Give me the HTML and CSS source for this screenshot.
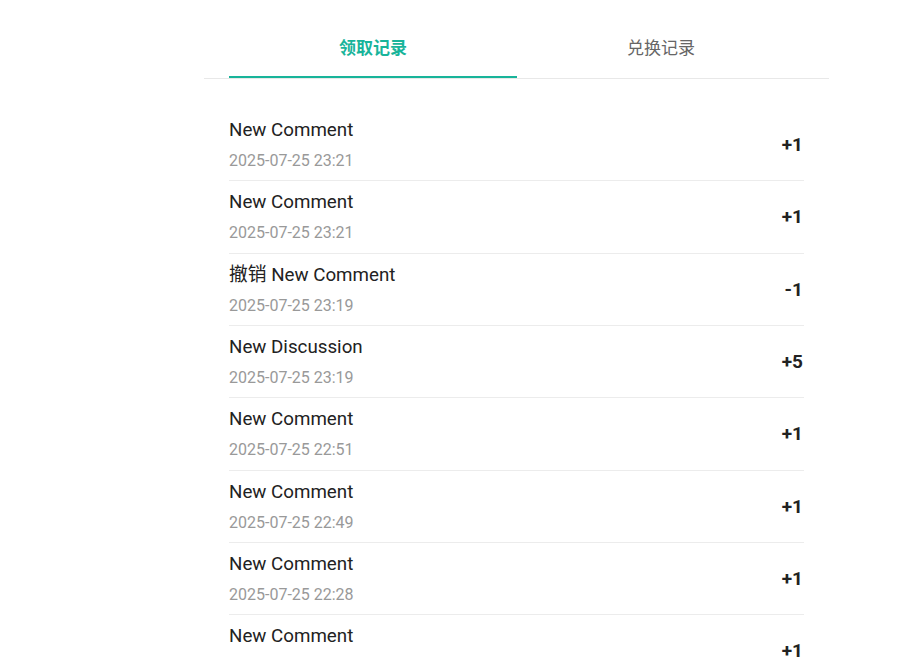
FILE: index.html
```html
<!DOCTYPE html>
<html lang="zh-CN">
<head>
    <meta charset="UTF-8">
    <meta name="viewport" content="width=device-width, initial-scale=1.0">
    <title>积分记录</title>
    <link rel="stylesheet" href="styles.css">
</head>
<body>
    <main class="records">
        <!-- Pestañas -->
        <div class="tabs">
            <button class="tab active">领取记录</button>
            <button class="tab">兑换记录</button>
        </div>

        <!-- Lista de registros -->
        <ul class="record-list">
            <li class="record">
                <div class="record-info">
                    <div class="record-title">New Comment</div>
                    <div class="record-date">2025-07-25 23:21</div>
                </div>
                <div class="record-amount">+1</div>
            </li>
            <li class="record">
                <div class="record-info">
                    <div class="record-title">New Comment</div>
                    <div class="record-date">2025-07-25 23:21</div>
                </div>
                <div class="record-amount">+1</div>
            </li>
            <li class="record">
                <div class="record-info">
                    <div class="record-title">撤销 New Comment</div>
                    <div class="record-date">2025-07-25 23:19</div>
                </div>
                <div class="record-amount">-1</div>
            </li>
            <li class="record">
                <div class="record-info">
                    <div class="record-title">New Discussion</div>
                    <div class="record-date">2025-07-25 23:19</div>
                </div>
                <div class="record-amount">+5</div>
            </li>
            <li class="record">
                <div class="record-info">
                    <div class="record-title">New Comment</div>
                    <div class="record-date">2025-07-25 22:51</div>
                </div>
                <div class="record-amount">+1</div>
            </li>
            <li class="record">
                <div class="record-info">
                    <div class="record-title">New Comment</div>
                    <div class="record-date">2025-07-25 22:49</div>
                </div>
                <div class="record-amount">+1</div>
            </li>
            <li class="record">
                <div class="record-info">
                    <div class="record-title">New Comment</div>
                    <div class="record-date">2025-07-25 22:28</div>
                </div>
                <div class="record-amount">+1</div>
            </li>
            <li class="record">
                <div class="record-info">
                    <div class="record-title">New Comment</div>
                    <div class="record-date">2025-07-25 22:20</div>
                </div>
                <div class="record-amount">+1</div>
            </li>
        </ul>
    </main>
</body>
</html>
```

FILE: styles.css
```css
/* Reset básico */
* {
    margin: 0;
    padding: 0;
    box-sizing: border-box;
}

body {
    font-family: Roboto, "Noto Sans CJK SC", sans-serif;
    background-color: #ffffff;
    color: #222222;
    overflow: hidden;
}

/* Contenedor */
.records {
    width: 625px;
    margin-left: 204px;
    margin-top: 20px;
}

/* Pestañas */
.tabs {
    display: flex;
    padding: 0 24px 0 25px;
    border-bottom: 1px solid #e8e8e8;
}

.tab {
    flex: 1;
    height: 58px;
    line-height: 54px;
    padding-bottom: 2px;
    background: none;
    border: none;
    border-bottom: 2px solid transparent;
    font-family: "Noto Sans CJK SC", sans-serif;
    font-size: 17px;
    color: #666666;
    cursor: pointer;
}

.tab.active {
    color: #18b49a;
    font-weight: 700;
    border-bottom-color: #18b49a;
}

/* Lista */
.record-list {
    list-style: none;
    padding: 30px 25px 0;
}

.record {
    display: flex;
    justify-content: space-between;
    align-items: center;
    padding: 9px 0 7.33px;
    border-bottom: 1px solid #ececec;
}

.record-title {
    font-size: 18.75px;
    line-height: 24px;
    color: #222222;
}

.record-date {
    margin-top: 7px;
    font-size: 16px;
    line-height: 24px;
    color: #999999;
}

.record-amount {
    font-size: 19px;
    font-weight: 700;
    color: #222222;
    padding: 0 1px 2px 0;
}
```
